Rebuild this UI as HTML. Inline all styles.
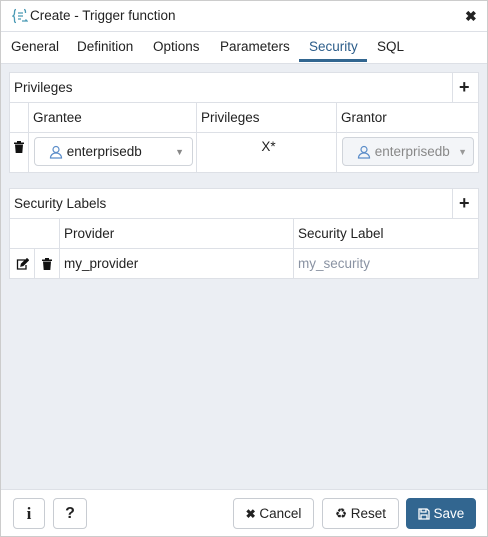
<!DOCTYPE html>
<html><head><style>
*{box-sizing:border-box;margin:0;padding:0}
body{width:488px;height:537px;font-family:"Liberation Sans",sans-serif;font-size:13px;color:#222;background:#fff;position:relative;overflow:hidden}
.abs{position:absolute}
.title{left:0;top:0;width:488px;height:32px;border-bottom:1px solid #dde0e6}
.tabs{left:0;top:32px;width:488px;height:31px}
.tab{position:absolute;top:7px;font-size:13.5px}
.content{left:0;top:63px;width:488px;height:427px;background:#ebeef3;border-top:1px solid #dde0e6}
.panel{background:#fff;border:1px solid #dde0e6}
.cell{position:absolute;border-right:1px solid #dde0e6;border-bottom:1px solid #dde0e6;padding-left:4px;display:flex;align-items:center;font-size:13.5px}
.btn{position:absolute;top:498px;height:31px;border:1px solid #c8ccd2;border-radius:4px;background:#fff;display:flex;align-items:center;justify-content:center;font-size:13.5px}
.sel{position:absolute;border:1px solid #d0d4da;border-radius:4px;height:29px;display:flex;align-items:center;padding-left:14px;font-size:13.5px}
.frame{left:0;top:0;width:488px;height:537px;border:1px solid #ccc;pointer-events:none}
.ic{color:#111;font-weight:bold}
</style></head><body>
<div class="abs title">
<svg class="abs" style="left:12px;top:8px" width="16" height="16" viewBox="0 0 16 16" fill="none" stroke="#4a9ab5" stroke-width="1.3"><path d="M4 1.5C2.5 1.5 2.5 3 2.5 5S1 8 1 8s1.5 0 1.5 3 0 3.5 1.5 3.5"/><path d="M6 5h5M6 8h5M6 11h3"/><path d="M12 1.5c1.5 0 1.5 1.5 1.5 3.5M10 13h5l-1.5-1.5"/></svg>
<div class="abs" style="left:30px;top:8px;font-size:13.5px">Create - Trigger function</div>
<div class="abs" style="left:465px;top:8px;font-size:14px;font-weight:bold">✖</div>
</div>
<div class="abs tabs">
<div class="tab" style="left:11px">General</div>
<div class="tab" style="left:77px">Definition</div>
<div class="tab" style="left:153px">Options</div>
<div class="tab" style="left:220px">Parameters</div>
<div class="tab" style="left:309px;color:#2c5d8a">Security</div>
<div class="tab" style="left:377px">SQL</div>
<div class="abs" style="left:299px;top:27px;width:68px;height:3px;background:#326690"></div>
</div>
<div class="abs content"></div>

<div class="abs panel" style="left:9px;top:72px;width:470px;height:101px">
<div class="cell" style="left:0;top:0;width:443px;height:30px">Privileges</div>
<div class="cell" style="left:443px;top:0;width:25px;height:30px;border-right:none;font-weight:bold;font-size:18px;padding-left:6px">+</div>
<div class="cell" style="left:0;top:30px;width:19px;height:30px"></div>
<div class="cell" style="left:19px;top:30px;width:168px;height:30px">Grantee</div>
<div class="cell" style="left:187px;top:30px;width:140px;height:30px">Privileges</div>
<div class="cell" style="left:327px;top:30px;width:141px;height:30px;border-right:none">Grantor</div>
<div class="cell" style="left:0;top:60px;width:19px;height:39px;border-bottom:none;align-items:flex-start;padding-top:8px;padding-left:4px"><svg width="10" height="12" viewBox="0 0 10 12"><path d="M0 1.5h10v1.5H0zM3 0h4v1.5H3zM1 3.5h8L8.3 12H1.7z" fill="#111"/></svg></div>
<div class="cell" style="left:19px;top:60px;width:168px;height:39px;border-bottom:none"></div>
<div class="cell" style="left:187px;top:60px;width:140px;height:39px;border-bottom:none;justify-content:center;align-items:flex-start;padding-top:6px">X*</div>
<div class="sel" style="left:24px;top:64px;width:159px"><svg width="14" height="14" viewBox="0 0 14 14" fill="none" stroke="#5b8dc9" stroke-width="1.2"><circle cx="7" cy="4.5" r="3"/><path d="M1.5 13c0-3 2.5-5 5.5-5s5.5 2 5.5 5z"/></svg>&nbsp;enterprisedb<span class="abs" style="right:8px;top:9px;font-size:9px;color:#888">▼</span></div>
<div class="sel" style="left:332px;top:64px;width:132px;background:#f3f5f8;color:#888"><svg width="14" height="14" viewBox="0 0 14 14" fill="none" stroke="#5b8dc9" stroke-width="1.2"><circle cx="7" cy="4.5" r="3"/><path d="M1.5 13c0-3 2.5-5 5.5-5s5.5 2 5.5 5z"/></svg>&nbsp;enterprisedb<span class="abs" style="right:6px;top:9px;font-size:9px;color:#999">▼</span></div>
</div>

<div class="abs panel" style="left:9px;top:188px;width:470px;height:91px">
<div class="cell" style="left:0;top:0;width:443px;height:30px">Security Labels</div>
<div class="cell" style="left:443px;top:0;width:25px;height:30px;border-right:none;font-weight:bold;font-size:18px;padding-left:6px">+</div>
<div class="cell" style="left:0;top:30px;width:25px;height:30px;border-right:none"></div>
<div class="cell" style="left:25px;top:30px;width:25px;height:30px"></div>
<div class="cell" style="left:50px;top:30px;width:234px;height:30px">Provider</div>
<div class="cell" style="left:284px;top:30px;width:184px;height:30px;border-right:none">Security Label</div>
<div class="cell" style="left:0;top:60px;width:25px;height:29px;border-bottom:none;padding-left:6px"><svg width="13" height="12" viewBox="0 0 13 12" fill="none" stroke="#111" stroke-width="1.3"><path d="M9 2H1.5v9h8.5V7"/><path d="M5 8l.5-2L11 .8l1.4 1.4L7 7.5z" fill="#111"/></svg></div>
<div class="cell" style="left:25px;top:60px;width:25px;height:29px;border-bottom:none;padding-left:7px"><svg width="10" height="12" viewBox="0 0 10 12"><path d="M0 1.5h10v1.5H0zM3 0h4v1.5H3zM1 3.5h8L8.3 12H1.7z" fill="#111"/></svg></div>
<div class="cell" style="left:50px;top:60px;width:234px;height:29px;border-bottom:none">my_provider</div>
<div class="cell" style="left:284px;top:60px;width:184px;height:29px;border:none;color:#8a93a3">my_security</div>
</div>

<div class="abs" style="left:0;top:489px;width:488px;height:1px;background:#dde0e6"></div>
<div class="btn" style="left:13px;width:32px;font-weight:bold;font-family:'Liberation Serif',serif;font-size:17px">i</div>
<div class="btn" style="left:53px;width:34px;font-weight:bold;font-size:16px">?</div>
<div class="btn" style="left:233px;width:81px"><b style="font-size:12px">✖</b>&nbsp;Cancel</div>
<div class="btn" style="left:322px;width:77px">♻&nbsp;Reset</div>
<div class="btn" style="left:406px;width:70px;background:#326690;border-color:#326690;color:#fff"><svg width="12" height="12" viewBox="0 0 12 12" fill="none" stroke="#fff" stroke-width="1.3"><path d="M1 1h8l2 2v8H1z"/><path d="M3 1v3h5V1M3 11V7h6v4"/></svg>&nbsp;Save</div>
<div class="abs frame"></div>
</body></html>
